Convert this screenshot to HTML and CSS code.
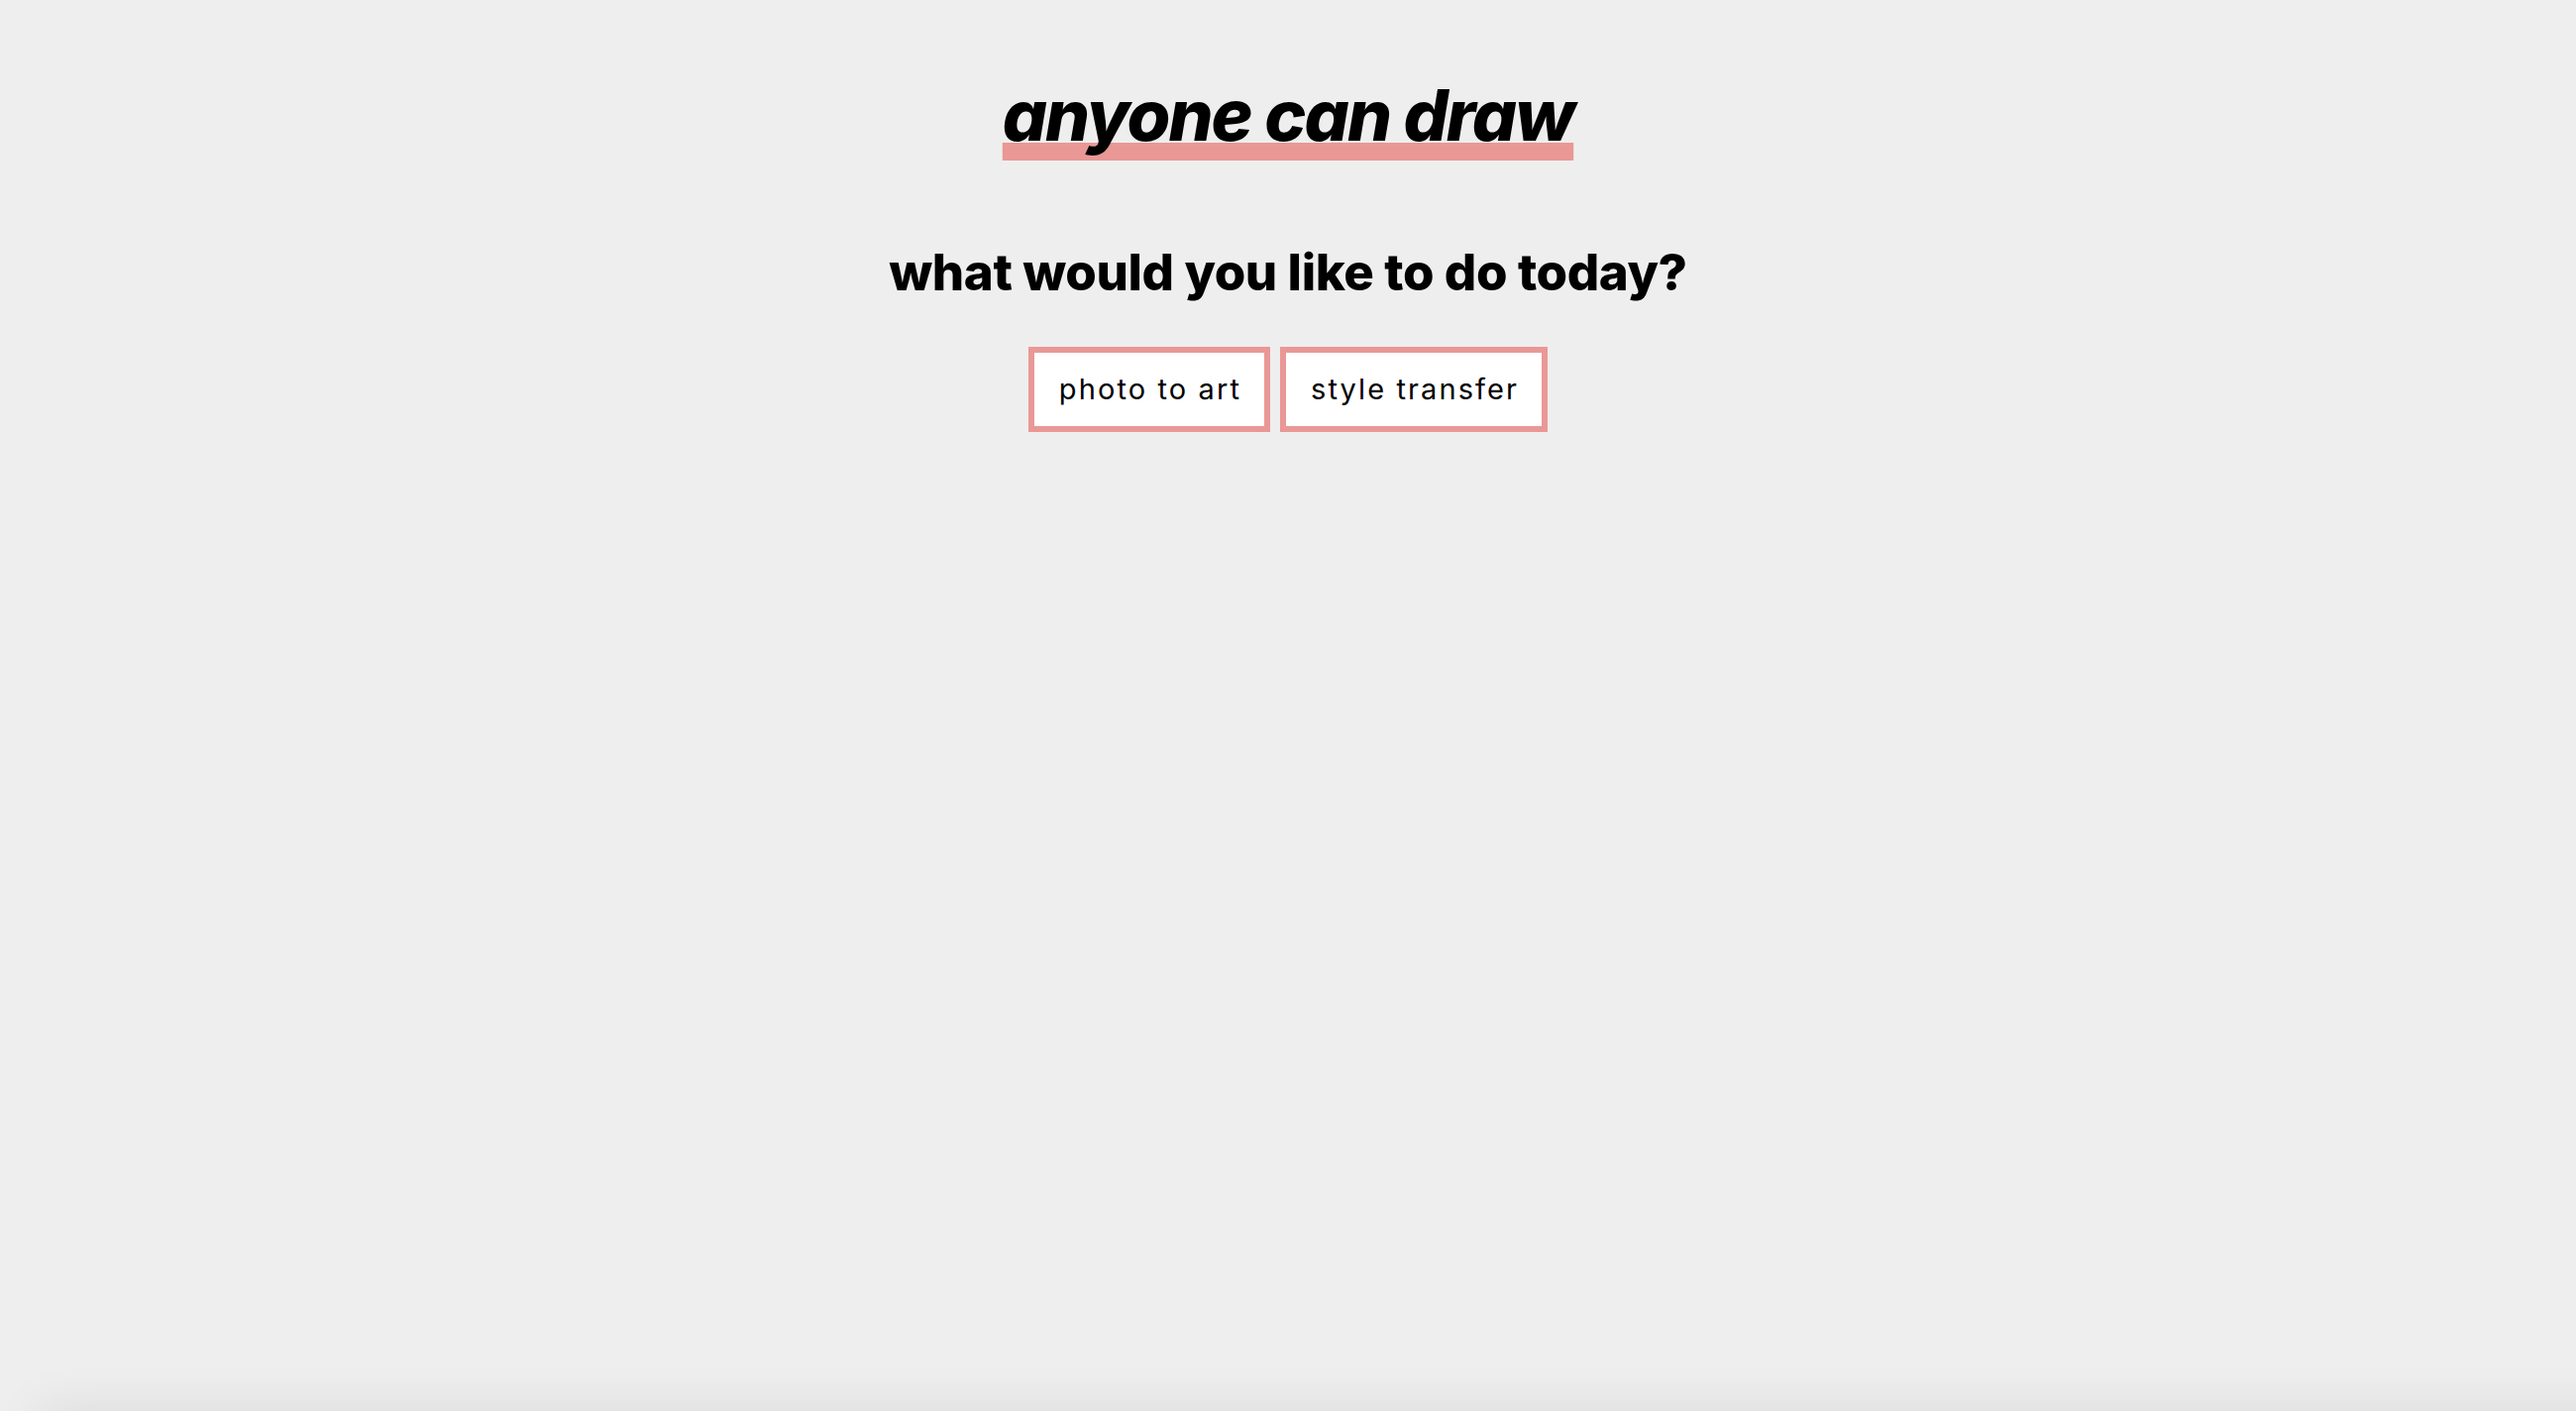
FILE: index.html
```html
<!DOCTYPE html>
<html lang="en">
<head>
<meta charset="utf-8">
<title>anyone can draw</title>
<link rel="stylesheet" href="styles.css">
</head>
<body>
<main class="app">
  <h1 class="title"><span class="title-text">anyone can draw</span></h1>
  <h2 class="prompt">what would you like to do today?</h2>
  <div class="actions">
    <button class="btn" type="button">photo to art</button>
    <button class="btn" type="button">style transfer</button>
  </div>
</main>
<div class="dock"></div>
</body>
</html>
```

FILE: styles.css
```css
html, body {
  margin: 0;
  padding: 0;
  height: 100%;
}

body {
  background: #eeeeee;
  color: #000;
  font-family: Inter, "Open Sans", "DejaVu Sans", sans-serif;
  overflow: hidden;
}

.app {
  display: flex;
  flex-direction: column;
  align-items: center;
  padding-top: 81px;
}

.title {
  margin: 0;
  font-size: 71px;
  line-height: 71px;
  font-weight: 800;
  font-style: italic;
  letter-spacing: -2px;
}

.title-text {
  text-decoration-line: underline;
  text-decoration-color: #e99896;
  text-decoration-thickness: 18px;
  text-underline-offset: 2px;
  text-decoration-skip-ink: none;
}

.prompt {
  margin: 97px 0 0;
  font-size: 51px;
  line-height: 51px;
  font-weight: 800;
  letter-spacing: -0.4px;
}

.actions {
  display: flex;
  gap: 10px;
  margin-top: 50px;
}

.btn {
  font-family: Inter, "Open Sans", sans-serif;
  font-size: 29px;
  line-height: 42px;
  font-weight: 400;
  letter-spacing: 2.1px;
  color: #000;
  background: #ffffff;
  border: 6px solid #e99896;
  padding: 16px 23px 16px 25px;
  margin: 0;
  border-radius: 0;
}

.dock {
  position: fixed;
  left: 40px;
  right: -200px;
  top: 100%;
  height: 200px;
  box-shadow: 0 0 50px rgba(0, 0, 0, 0.09);
  background: #eeeeee;
}
```
